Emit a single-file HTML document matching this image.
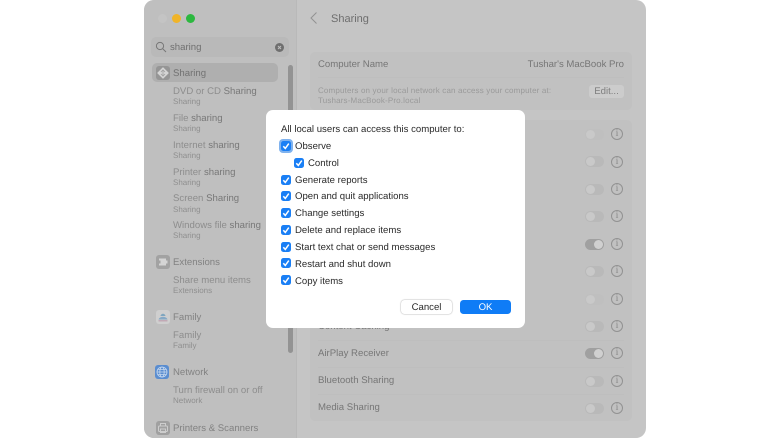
<!DOCTYPE html>
<html><head><meta charset="utf-8">
<style>
html,body{margin:0;padding:0;width:780px;height:438px;overflow:hidden;background:#fff}
body{font-family:"Liberation Sans",sans-serif;position:relative;text-rendering:geometricPrecision;filter:blur(.3px)}
.a,.t,.s,.m,.l{position:absolute;white-space:nowrap}
.win{position:absolute;left:144px;top:0;width:502px;height:438px;background:#c5c5c5;border-radius:10px;overflow:hidden}
.side{position:absolute;left:144px;top:0;width:152px;height:438px;background:#bfbfbf;border-radius:10px 0 0 10px}
.t{font-size:9.6px;line-height:12px;color:#8d8d8d}
.t b{font-weight:400;color:#787878}
.s{font-size:8px;line-height:10px;color:#8f8f8f}
.m{font-size:9.6px;line-height:12px;color:#767676}
.l{font-size:9.6px;line-height:12px;color:#2a2a2a}
.tg{position:absolute;left:585px;width:19px;height:11px;border-radius:6px;background:#b9b9b9}
.tg:after{content:"";position:absolute;left:1px;top:1px;width:9px;height:9px;border-radius:50%;background:#c9c9c9}
.tg.on{background:#a0a0a0}
.tg.on:after{left:9px;background:#d0d0d0}
.i{position:absolute;left:611px;width:10px;height:10px;border:1px solid #929292;border-radius:50%;color:#8a8a8a;font:10px/10px "Liberation Serif",serif;text-align:center}
.cb{position:absolute;width:10px;height:10px;border-radius:2.5px;background:#1a7ff5}
.cb svg{position:absolute;left:0;top:0}
.ln{position:absolute;left:318px;width:306px;height:1px;background:#bebebe}
</style></head><body>
<div class="win"></div>
<div class="side"></div>
<div class="a" style="left:296px;top:0;width:1px;height:438px;background:#b9b9b9"></div>

<!-- traffic lights -->
<div class="a" style="left:158px;top:14px;width:9px;height:9px;border-radius:50%;background:#c4c4c4"></div>
<div class="a" style="left:172px;top:14px;width:9px;height:9px;border-radius:50%;background:#f0b429"></div>
<div class="a" style="left:186px;top:14px;width:9px;height:9px;border-radius:50%;background:#2cb83f"></div>

<!-- search -->
<div class="a" style="left:151px;top:37px;width:138px;height:20px;border-radius:5px;background:#b9b9b9"></div>
<svg class="a" style="left:155px;top:41px" width="12" height="12" viewBox="0 0 12 12" fill="none" stroke="#767676" stroke-width="1"><circle cx="5" cy="5" r="3.6"/><path d="M7.7 7.7L11 11"/></svg>
<div class="t" style="left:170px;top:41.5px;color:#707070">sharing</div>
<div class="a" style="left:275px;top:43px;width:9px;height:9px;border-radius:50%;background:#6f6f6f"></div>
<svg class="a" style="left:275px;top:43px" width="9" height="9" fill="none" stroke="#c0c0c0" stroke-width="1"><path d="M3 3L6 6M6 3L3 6"/></svg>

<!-- sidebar selection -->
<div class="a" style="left:152px;top:63px;width:126px;height:19px;border-radius:5px;background:#afafaf"></div>
<div class="a" style="left:156px;top:66px;width:14px;height:14px;border-radius:3px;background:#959595"></div>
<svg class="a" style="left:156px;top:66px" width="14" height="14"><path d="M7 1.8L12.2 7 7 12.2 1.8 7Z" fill="#d4d4d4" stroke="#d4d4d4" stroke-linejoin="round"/><path d="M7 3.8V10M5 6L7 4 9 6M5 8L7 10 9 8" fill="none" stroke="#a0a0a0" stroke-width=".8"/></svg>
<div class="t" style="left:173px;top:67.5px;color:#727272">Sharing</div>

<div class="t" style="left:173px;top:86px">DVD or CD <b>Sharing</b></div><div class="s" style="left:173px;top:97px">Sharing</div>
<div class="t" style="left:173px;top:113px">File <b>sharing</b></div><div class="s" style="left:173px;top:124px">Sharing</div>
<div class="t" style="left:173px;top:140px">Internet <b>sharing</b></div><div class="s" style="left:173px;top:151px">Sharing</div>
<div class="t" style="left:173px;top:167px">Printer <b>sharing</b></div><div class="s" style="left:173px;top:178px">Sharing</div>
<div class="t" style="left:173px;top:193px">Screen <b>Sharing</b></div><div class="s" style="left:173px;top:204.5px">Sharing</div>
<div class="t" style="left:173px;top:220px">Windows file <b>sharing</b></div><div class="s" style="left:173px;top:231px">Sharing</div>

<!-- Extensions -->
<div class="a" style="left:156px;top:255px;width:14px;height:14px;border-radius:3px;background:#a2a2a2"></div>
<svg class="a" style="left:156px;top:255px" width="14" height="14"><path d="M3 3.5H10V5.5H11.5V8.5H10V10.5H3V8.5H4.5V5.5H3Z" fill="#d4d4d4"/></svg>
<div class="t" style="left:173px;top:256.5px;color:#828282">Extensions</div>
<div class="t" style="left:173px;top:275px">Share menu items</div><div class="s" style="left:173px;top:285.5px">Extensions</div>

<!-- Family -->
<div class="a" style="left:156px;top:310px;width:14px;height:14px;border-radius:3px;background:#cfcfcf"></div>
<svg class="a" style="left:156px;top:310px" width="14" height="14"><path d="M4.5 6C5 3 9 3 9.5 6Z" fill="#7fa6bf"/><path d="M2.5 9.5C3.5 6 10.5 6 11.5 9.5Z" fill="#86a9c6"/><path d="M2.5 10H11.5V11.5H2.5Z" fill="#c2a9b5"/></svg>
<div class="t" style="left:173px;top:312px;color:#828282">Family</div>
<div class="t" style="left:173px;top:330px">Family</div><div class="s" style="left:173px;top:340.5px">Family</div>

<!-- Network -->
<div class="a" style="left:155px;top:365px;width:14px;height:14px;border-radius:3px;background:#5a8dd0"></div>
<svg class="a" style="left:155px;top:365px" width="14" height="14" fill="none" stroke="#c6d8ee" stroke-width=".8"><circle cx="7" cy="7" r="5"/><ellipse cx="7" cy="7" rx="2.2" ry="5"/><path d="M2 7H12M3 4.4H11M3 9.6H11"/></svg>
<div class="t" style="left:173px;top:367px;color:#828282">Network</div>
<div class="t" style="left:173px;top:385px">Turn firewall on or off</div><div class="s" style="left:173px;top:396px">Network</div>

<!-- Printers -->
<div class="a" style="left:156px;top:421px;width:14px;height:14px;border-radius:3px;background:#a0a0a0"></div>
<svg class="a" style="left:156px;top:421px" width="14" height="14" fill="none" stroke="#cdcdcd" stroke-width="1"><rect x="2.5" y="5" width="9" height="5.5" rx="1"/><rect x="4.5" y="2.5" width="5" height="2.5"/><rect x="4.5" y="8" width="5" height="3.5"/></svg>
<div class="t" style="left:173px;top:422.5px;color:#828282">Printers &amp; Scanners</div>

<!-- scrollbar -->
<div class="a" style="left:288px;top:65px;width:5px;height:288px;border-radius:3px;background:#939393"></div>

<!-- header -->
<svg class="a" style="left:309px;top:11px" width="10" height="14" fill="none" stroke="#929292" stroke-width="1"><path d="M7.5 1.5L2 7L7.5 12.5"/></svg>
<div class="a" style="left:331px;top:11.5px;font-size:11px;line-height:14px;color:#6e6e6e;white-space:nowrap">Sharing</div>

<!-- cards -->
<div class="a" style="left:310px;top:52px;width:322px;height:58px;border-radius:5px;background:#c1c1c1"></div>
<div class="a" style="left:310px;top:120px;width:322px;height:301px;border-radius:5px;background:#c1c1c1"></div>
<div class="m" style="left:318px;top:58.5px">Computer Name</div>
<div class="m" style="right:156px;top:58.5px">Tushar's MacBook Pro</div>
<div class="ln" style="top:77px"></div>
<div class="a" style="left:318px;top:85.5px;font-size:8px;line-height:10px;color:#9a9a9a;letter-spacing:.16px;white-space:nowrap">Computers on your local network can access your computer at:<br>Tushars-MacBook-Pro.local</div>
<div class="a" style="left:589px;top:84.5px;width:35px;height:13px;border-radius:3px;background:#cccccc;font-size:9.6px;line-height:13px;color:#7f7f7f;text-align:center">Edit...</div>

<!-- rows -->
<div class="tg" style="top:129px;background:#bfbfbf"></div><div class="i" style="top:128px">i</div>
<div class="tg" style="top:156px"></div><div class="i" style="top:156px">i</div>
<div class="tg" style="top:184px"></div><div class="i" style="top:183px">i</div>
<div class="tg" style="top:211px"></div><div class="i" style="top:210px">i</div>
<div class="tg on" style="top:239px"></div><div class="i" style="top:238px">i</div>
<div class="tg" style="top:266px"></div><div class="i" style="top:265px">i</div>
<div class="tg" style="top:294px;background:#bfbfbf"></div><div class="i" style="top:293px">i</div>
<div class="tg" style="top:321px"></div><div class="i" style="top:320px">i</div>
<div class="tg on" style="top:348px"></div><div class="i" style="top:347px">i</div>
<div class="tg" style="top:376px"></div><div class="i" style="top:375px">i</div>
<div class="tg" style="top:403px"></div><div class="i" style="top:402px">i</div>
<div class="ln" style="top:340px"></div>
<div class="ln" style="top:367px"></div>
<div class="ln" style="top:394px"></div>
<div class="m" style="left:318px;top:320.5px">Content Caching</div>
<div class="m" style="left:318px;top:347.5px">AirPlay Receiver</div>
<div class="m" style="left:318px;top:374.5px">Bluetooth Sharing</div>
<div class="m" style="left:318px;top:402px">Media Sharing</div>

<!-- dialog -->
<div class="a" style="left:266px;top:110px;width:259px;height:218px;border-radius:7px;background:#fff"></div>
<div class="l" style="left:281px;top:123.5px">All local users can access this computer to:</div>

<div class="a" style="left:279px;top:139px;width:14px;height:14px;border-radius:4px;background:#7fb2ee"></div>
<div class="cb" style="left:281px;top:141px"><svg width="10" height="10" fill="none" stroke="#fff" stroke-width="1.5"><path d="M2.3 5.2L4.3 7.4L7.8 2.6"/></svg></div><div class="l" style="left:295px;top:140.5px">Observe</div>
<div class="cb" style="left:294px;top:157.7px"><svg width="10" height="10" fill="none" stroke="#fff" stroke-width="1.5"><path d="M2.3 5.2L4.3 7.4L7.8 2.6"/></svg></div><div class="l" style="left:308px;top:157.5px">Control</div>
<div class="cb" style="left:281px;top:174.7px"><svg width="10" height="10" fill="none" stroke="#fff" stroke-width="1.5"><path d="M2.3 5.2L4.3 7.4L7.8 2.6"/></svg></div><div class="l" style="left:295px;top:174.5px">Generate reports</div>
<div class="cb" style="left:281px;top:191px"><svg width="10" height="10" fill="none" stroke="#fff" stroke-width="1.5"><path d="M2.3 5.2L4.3 7.4L7.8 2.6"/></svg></div><div class="l" style="left:295px;top:191px">Open and quit applications</div>
<div class="cb" style="left:281px;top:208px"><svg width="10" height="10" fill="none" stroke="#fff" stroke-width="1.5"><path d="M2.3 5.2L4.3 7.4L7.8 2.6"/></svg></div><div class="l" style="left:295px;top:208px">Change settings</div>
<div class="cb" style="left:281px;top:225px"><svg width="10" height="10" fill="none" stroke="#fff" stroke-width="1.5"><path d="M2.3 5.2L4.3 7.4L7.8 2.6"/></svg></div><div class="l" style="left:295px;top:225px">Delete and replace items</div>
<div class="cb" style="left:281px;top:241.7px"><svg width="10" height="10" fill="none" stroke="#fff" stroke-width="1.5"><path d="M2.3 5.2L4.3 7.4L7.8 2.6"/></svg></div><div class="l" style="left:295px;top:241.5px">Start text chat or send messages</div>
<div class="cb" style="left:281px;top:258.3px"><svg width="10" height="10" fill="none" stroke="#fff" stroke-width="1.5"><path d="M2.3 5.2L4.3 7.4L7.8 2.6"/></svg></div><div class="l" style="left:295px;top:258.5px">Restart and shut down</div>
<div class="cb" style="left:281px;top:275.3px"><svg width="10" height="10" fill="none" stroke="#fff" stroke-width="1.5"><path d="M2.3 5.2L4.3 7.4L7.8 2.6"/></svg></div><div class="l" style="left:295px;top:275.5px">Copy items</div>

<div class="a" style="left:401px;top:300px;width:51px;height:14px;border-radius:3.5px;background:#fff;box-shadow:0 0 1.5px rgba(0,0,0,.45);font-size:9.6px;line-height:15px;color:#2a2a2a;text-align:center">Cancel</div>
<div class="a" style="left:460px;top:300px;width:51px;height:14px;border-radius:3.5px;background:#0f7cf6;font-size:9.6px;line-height:15px;color:#fff;text-align:center">OK</div>
</body></html>
